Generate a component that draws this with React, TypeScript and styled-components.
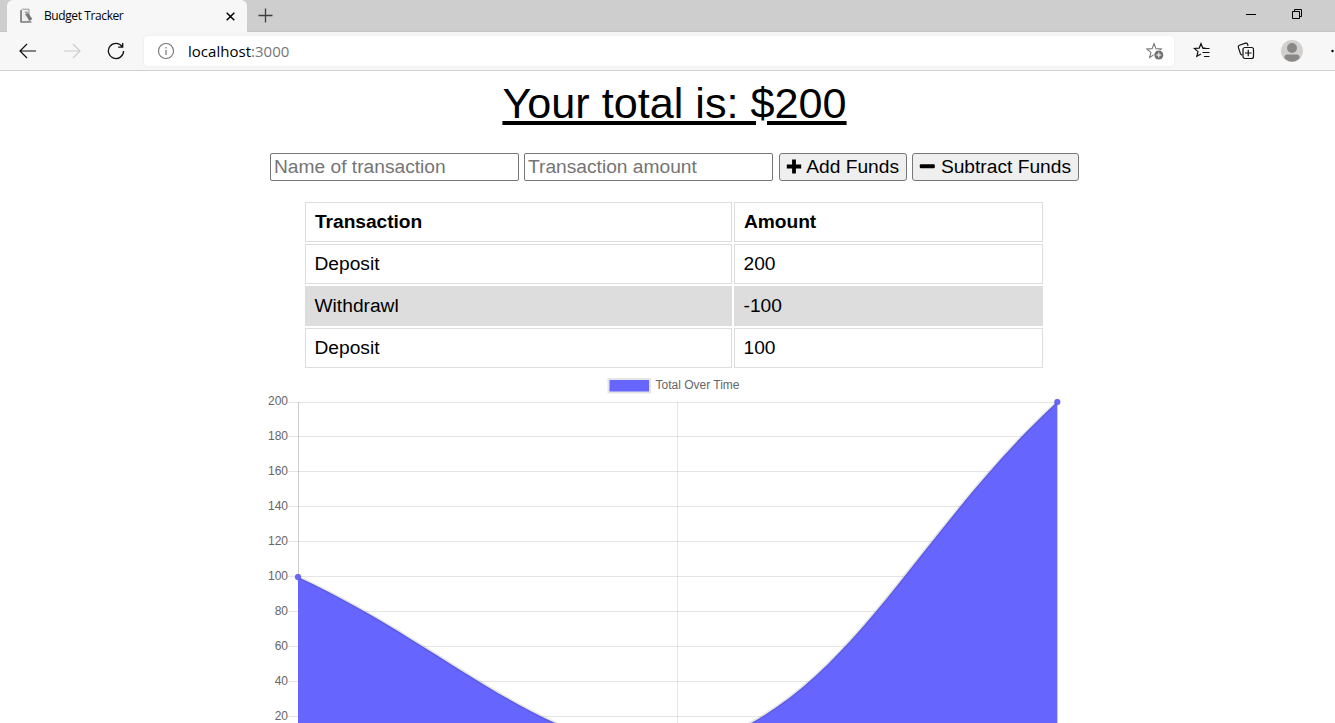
import React from "react";
import styled, { createGlobalStyle } from "styled-components";

const GlobalStyle = createGlobalStyle`
  * { box-sizing: border-box; }
  html, body { margin: 0; height: 723px; overflow: hidden; background: #fff; }
  svg { display: block; flex: none; }
`;

const Window = styled.div`
  width: 1335px;
  height: 723px;
  overflow: hidden;
  color: #000;
  font-family: "Liberation Sans", Arial, sans-serif;
`;

const TitleBar = styled.div`
  height: 32px;
  padding-left: 7px;
  display: flex;
  align-items: flex-start;
  background: linear-gradient(#cecece 31px, #c4c4c4 31px);
`;

const Tab = styled.div`
  width: 240px;
  height: 32px;
  padding: 0 12px;
  display: flex;
  align-items: center;
  border-radius: 6px 6px 0 0;
  background: #f7f7f7;
`;

const TabTitle = styled.span`
  flex: 1;
  padding-left: 11px;
  font: 12px/32px "Open Sans", "Noto Sans", sans-serif;
  letter-spacing: -0.4px;
`;

const NewTab = styled.div`
  padding: 8px 0 0 11px;
`;

const WindowControls = styled.div`
  margin-left: auto;
  padding: 8px 32px 0 0;
  display: flex;
  gap: 35px;
`;

const Toolbar = styled.div`
  height: 39px;
  padding-left: 19px;
  display: flex;
  align-items: center;
  background: #f7f7f7;
  border-bottom: 1px solid #d0d0d0;
`;

const NavIcons = styled.div`
  width: 125px;
  display: flex;
  gap: 26px;
`;

const AddressBar = styled.div`
  width: 1030px;
  height: 30px;
  padding: 0 10px 0 13px;
  display: flex;
  align-items: center;
  border-radius: 4px;
  background: #fff;
  box-shadow: 0 0 3px #e6e6e6;
`;

const Url = styled.span`
  flex: 1;
  padding-left: 13px;
  font: 15px/28px "Open Sans", "Noto Sans", sans-serif;
  letter-spacing: 0.02px;
`;

const Port = styled.span`
  color: #767676;
`;

const ToolbarIcons = styled.div`
  flex: 1;
  min-width: 0;
  padding-left: 19px;
  display: flex;
  align-items: center;
  overflow: hidden;
`;

const ToolbarIcon = styled.div<{ $gap: number }>`
  flex: none;
  margin-right: ${(p) => p.$gap}px;
`;

const Page = styled.main`
  width: 1349px;
  height: 652px;
  padding-top: 6px;
  display: flex;
  flex-direction: column;
  align-items: center;
  overflow: hidden;
  font-size: 19.2px;
`;

const Total = styled.div`
  height: 52px;
  font-size: 43.2px;
  line-height: 52px;
  text-decoration: underline;
  text-decoration-thickness: 4px;
  text-underline-offset: 3px;
`;

/* The underline breaks where the dollar sign descends through it. */
const Dollar = styled.span`
  display: inline-block;
  height: 52px;
  vertical-align: top;
  background: linear-gradient(90deg, #000 6.4px, transparent 6.4px 17.4px, #000 17.4px) 0 44px / 100% 4px no-repeat;
`;

const Form = styled.div`
  height: 28px;
  margin: 24px 0 21px;
  display: flex;
`;

const Field = styled.input`
  width: 249px;
  height: 28px;
  margin-right: 5px;
  padding: 1px 3px;
  border: 1px solid #767676;
  border-radius: 2px;
  font: 19.2px "Liberation Sans", Arial, sans-serif;
  &::placeholder { color: #757575; }
`;

const FundsButton = styled.button<{ $width: number; $gap: number }>`
  width: ${(p) => p.$width}px;
  height: 28px;
  margin-left: ${(p) => p.$gap}px;
  padding: 0 7px 0 6px;
  display: flex;
  align-items: center;
  justify-content: space-between;
  white-space: nowrap;
  color: #000;
  background: #efefef;
  border: 1px solid #767676;
  border-radius: 3px;
  font: 19.2px/26px "Liberation Sans", Arial, sans-serif;
`;

const Table = styled.div`
  width: 739px;
  display: grid;
  grid-template-columns: 427px 309px;
  grid-auto-rows: 40px;
  gap: 2px;
`;

const Cell = styled.div<{ $head?: boolean; $shaded?: boolean }>`
  padding-left: ${(p) => (p.$head ? 9 : 8.5)}px;
  border: 1px solid #ddd;
  background: ${(p) => (p.$shaded ? "#ddd" : "#fff")};
  font-weight: ${(p) => (p.$head ? 700 : 400)};
  letter-spacing: ${(p) => (p.$head ? "-0.05px" : "0")};
  line-height: 37px;
`;

const Chart = styled.div`
  width: 809px;
  height: 355px;
`;

const rows = [
  { name: "Deposit", amount: "200" },
  { name: "Withdrawl", amount: "-100" },
  { name: "Deposit", amount: "100" },
];

const star = "M7 1.2 8.8 5.7 13.7 6 9.9 9.1 11.1 13.9 7 11.2 2.9 13.9 4.1 9.1.3 6 5.2 5.7Z";
const ticks = [200, 180, 160, 140, 120, 100, 80, 60, 40, 20];

function TotalChart() {
  return (
    <Chart>
      <svg width="809" height="355" viewBox="270 368 809 355" overflow="visible">
        <rect x="608.5" y="379" width="41.5" height="13.5" fill="#6666ff" stroke="#e5e5e5" strokeWidth="2" />
        <g fontFamily="Liberation Sans, Arial, sans-serif" fontSize="12" fill="#666">
          <text x="655.5" y="389">Total Over Time</text>
          {ticks.map((t, i) => (
            <text key={t} x="288" y={Math.round(405 + i * 35)} textAnchor="end">{t}</text>
          ))}
        </g>
        <g stroke="#000" strokeOpacity=".1" fill="none">
          {ticks.map((t, i) => (
            <path key={t} d={`M288 ${i === 0 ? 402.5 : 401.5 + i * 35}H1057`} />
          ))}
          <path d="M677.5 402V723M1057.5 402V723" />
          <path d="M298.5 402V723" strokeOpacity=".19" />
        </g>
        <path d="M298 577C449.8 646.8 541.7 751.5 677.5 751.5C845.3 712.8 905.2 541.8 1057 402V752H298Z" fill="#6666ff" />
        <path d="M298 577C449.8 646.8 541.7 751.5 677.5 751.5C845.3 712.8 905.2 541.8 1057 402" fill="none" stroke="#000" strokeOpacity=".1" strokeWidth="3" />
        <path d="M1057.5 403V723" stroke="#c9c9f2" />
        <g fill="#6666ff" stroke="#000" strokeOpacity=".1">
          <circle cx="298" cy="577" r="3" />
          <circle cx="1057.3" cy="402" r="3" />
        </g>
      </svg>
    </Chart>
  );
}

function Browser() {
  return (
    <>
      <TitleBar>
        <Tab>
          <svg width="14" height="16" viewBox="0 0 14 16">
            <path d="M3.5 1.2H10V14H1.5V3Z" fill="#eee" stroke="#999" />
            <path d="M2.2 2V14M1.5 14H12.5" stroke="#888" strokeWidth="1.6" />
            <path d="m7.5 5.5 4.5 6.5" stroke="#777" strokeWidth="3.2" />
            <path d="m5.5 4 2.5-1 1.5 2-2.5 1.5Z" fill="#aaa" />
          </svg>
          <TabTitle>Budget Tracker</TabTitle>
          <svg width="9" height="9" viewBox="0 0 9 9"><path d="m.7.7 7.6 7.6m0-7.6L.7 8.3" stroke="#000" strokeWidth="1.5" /></svg>
        </Tab>
        <NewTab>
          <svg width="15" height="15" viewBox="0 0 15 15"><path d="M7.5.5v14M.5 7.5h14" stroke="#3d3d3d" strokeWidth="1.3" /></svg>
        </NewTab>
        <WindowControls>
          <svg width="12" height="13"><path d="M1 6.5h10" stroke="#000" /></svg>
          <svg width="11" height="12" fill="none" stroke="#000"><path d="M.5 3.5h7v7h-7zM2.5 3.5v-2h7v7h-2" /></svg>
        </WindowControls>
      </TitleBar>
      <Toolbar>
        <NavIcons>
          <svg width="18" height="18" fill="none" stroke="#111" strokeWidth="1.2"><path d="M17 9H1m7-7L1 9l7 7" /></svg>
          <svg width="18" height="18" fill="none" stroke="#ccc" strokeWidth="1.2"><path d="M1 9h16m-7-7 7 7-7 7" /></svg>
          <svg width="18" height="18" fill="none" stroke="#111" strokeWidth="1.3"><path d="M15.2 4.5A7.6 7.6 0 1 0 16.6 9M15.7 1v4.2h-4.5" /></svg>
        </NavIcons>
        <AddressBar>
          <svg width="18" height="18" fill="none" stroke="#757575" strokeWidth="1.1"><circle cx="9" cy="9" r="7.5" /><path d="M9 8v5M9 5v1.5" strokeWidth="1.2" /></svg>
          <Url>localhost<Port>:3000</Port></Url>
          <svg width="18" height="18" viewBox="0 0 18 18">
            <path d={star} transform="translate(.5 .5) scale(1.08)" fill="none" stroke="#777" />
            <circle cx="12.8" cy="13" r="5.3" fill="#fff" /><circle cx="12.8" cy="13" r="4.5" fill="#707070" />
            <path d="M10.3 13h5M12.8 10.5v5" stroke="#fff" />
          </svg>
        </AddressBar>
        <ToolbarIcons>
          <ToolbarIcon $gap={26}>
            <svg width="18" height="18" viewBox="0 0 18 18" fill="none" stroke="#111" strokeWidth="1.2"><path d="m12.5 6.2-2.7-.1L8 1.7 6.2 6.1 1.4 6.5 5 9.6l-1.2 4.7L7.9 12M10 6.5h6.5M9.5 10.5h7M11 14.5h5.5" /></svg>
          </ToolbarIcon>
          <ToolbarIcon $gap={26}>
            <svg width="18" height="18" viewBox="0 0 18 18" fill="none" stroke="#111" strokeWidth="1.2"><path d="M5 13.3 3.5 12 1.3 5.2Q1 3.7 2.4 3.2L8.6 1.2q1.5-.4 2 1L11 4" /><rect x="6" y="5.5" width="10.5" height="11" rx="2" /><path d="M11.25 7.8v6.4M8 11h6.5" /></svg>
          </ToolbarIcon>
          <ToolbarIcon $gap={28}>
            <svg width="22" height="22" viewBox="0 0 22 22"><circle cx="11" cy="11" r="11" fill="#d2d0ce" /><circle cx="11" cy="8" r="5" fill="#8a8886" /><path d="M3.5 18.5v-1.2q0-2.8 3-2.8h9q3 0 3 2.8v1.2q-7.5 6.5-15 0Z" fill="#8a8886" /></svg>
          </ToolbarIcon>
          <svg width="4" height="4"><circle cx="1.5" cy="2" r="1.2" /></svg>
        </ToolbarIcons>
      </Toolbar>
    </>
  );
}

export default function App() {
  return (
    <Window>
      <GlobalStyle />
      <Browser />
      <Page>
        <Total>Your total is: <Dollar>$</Dollar>200</Total>
        <Form>
          <Field placeholder="Name of transaction" />
          <Field placeholder="Transaction amount" />
          <FundsButton $width={128} $gap={1}>
            <svg width="16" height="16"><path d="M8 .5v14M.8 7.5h14.4" stroke="#000" strokeWidth="3.8" /></svg>
            Add Funds
          </FundsButton>
          <FundsButton $width={167} $gap={5}>
            <svg width="16" height="16"><rect x=".8" y="5.2" width="15" height="4" rx="1" /></svg>
            Subtract Funds
          </FundsButton>
        </Form>
        <Table>
          <Cell $head>Transaction</Cell>
          <Cell $head>Amount</Cell>
          {rows.map((r, i) => (
            <React.Fragment key={i}>
              <Cell $shaded={i % 2 === 1}>{r.name}</Cell>
              <Cell $shaded={i % 2 === 1}>{r.amount}</Cell>
            </React.Fragment>
          ))}
        </Table>
        <TotalChart />
      </Page>
    </Window>
  );
}
